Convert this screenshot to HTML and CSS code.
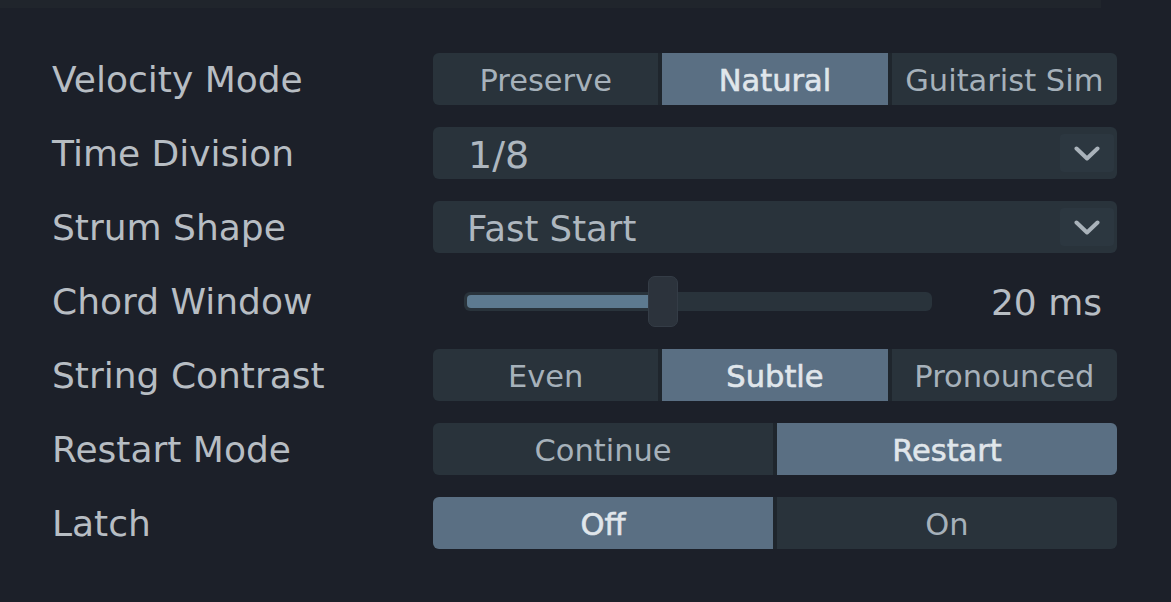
FILE: index.html
```html
<!DOCTYPE html>
<html>
<head>
<meta charset="utf-8">
<link rel="stylesheet" href="styles.css">
</head>
<body>
<div class="topband"></div>
<div class="panel">
  <div class="row">
    <div class="label">Velocity Mode</div>
    <div class="seg">
      <div class="opt">Preserve</div>
      <div class="opt on">Natural</div>
      <div class="opt">Guitarist Sim</div>
    </div>
  </div>
  <div class="row">
    <div class="label">Time Division</div>
    <div class="dropdown">
      <span class="dd-text digits">1/8</span>
      <span class="chev"><svg width="26" height="15" viewBox="0 0 26 15"><polyline points="2.5,2.5 13,12.5 23.5,2.5" fill="none" stroke="#a9b2ba" stroke-width="4" stroke-linecap="round" stroke-linejoin="round"/></svg></span>
    </div>
  </div>
  <div class="row">
    <div class="label">Strum Shape</div>
    <div class="dropdown">
      <span class="dd-text">Fast Start</span>
      <span class="chev"><svg width="26" height="15" viewBox="0 0 26 15"><polyline points="2.5,2.5 13,12.5 23.5,2.5" fill="none" stroke="#a9b2ba" stroke-width="4" stroke-linecap="round" stroke-linejoin="round"/></svg></span>
    </div>
  </div>
  <div class="row">
    <div class="label">Chord Window</div>
    <div class="slider">
      <div class="track">
        <div class="fill" style="width:188px"></div>
        <div class="thumb" style="left:184px"></div>
      </div>
      <div class="value">20 ms</div>
    </div>
  </div>
  <div class="row">
    <div class="label">String Contrast</div>
    <div class="seg">
      <div class="opt">Even</div>
      <div class="opt on">Subtle</div>
      <div class="opt">Pronounced</div>
    </div>
  </div>
  <div class="row">
    <div class="label">Restart Mode</div>
    <div class="seg">
      <div class="opt">Continue</div>
      <div class="opt on">Restart</div>
    </div>
  </div>
  <div class="row">
    <div class="label">Latch</div>
    <div class="seg">
      <div class="opt on">Off</div>
      <div class="opt">On</div>
    </div>
  </div>
</div>
</body>
</html>
```

FILE: styles.css
```css
html, body {
  margin: 0;
  padding: 0;
  background: #1c2029;
  width: 1171px;
  height: 602px;
  overflow: hidden;
  font-family: "DejaVu Sans", "Liberation Sans", sans-serif;
}

.topband {
  width: 1101px;
  height: 8px;
  background: #20252c;
}

.panel {
  padding: 45px 0 0 52px;
  display: flex;
  flex-direction: column;
  gap: 22px;
}

.row {
  display: grid;
  grid-template-columns: 381px 684px;
  grid-template-rows: 52px;
  height: 52px;
  align-items: center;
}

.label {
  color: #b7bdc3;
  font-size: 36px;
  line-height: 50px;
  padding-top: 2px;
  white-space: nowrap;
}

.seg {
  display: flex;
  gap: 4px;
  height: 52px;
  background: #1f262d;
  border-radius: 6px;
  overflow: hidden;
}

.opt {
  flex: 1;
  display: flex;
  align-items: center;
  justify-content: center;
  padding-top: 2px;
  background: #29333b;
  color: #a6b1ba;
  font-size: 30.5px;
  white-space: nowrap;
}

.opt.on {
  background: #5a6f83;
  color: #e0e6eb;
  -webkit-text-stroke: 0.6px #e0e6eb;
}

.dropdown {
  display: flex;
  align-items: center;
  height: 52px;
  background: #29333b;
  border-radius: 6px;
  padding: 0 3px 0 34px;
}

.dd-text {
  color: #aeb7bf;
  font-size: 35.5px;
  padding-top: 3px;
}

.dd-text.digits {
  font-size: 38px;
  padding-left: 1px;
}

.chev {
  margin-left: auto;
  width: 54px;
  height: 38px;
  background: #2c3740;
  border-radius: 4px;
  display: flex;
  align-items: center;
  justify-content: center;
}

.slider {
  display: flex;
  align-items: center;
  height: 52px;
  padding-left: 31px;
  padding-right: 15px;
}

.track {
  position: relative;
  width: 468px;
  height: 19px;
  box-sizing: border-box;
  padding: 3px;
  background: #29333b;
  border-radius: 6px;
}

.fill {
  height: 13px;
  background: #5d7a90;
  border-radius: 4px;
}

.thumb {
  position: absolute;
  top: -16px;
  width: 30px;
  height: 51px;
  box-sizing: border-box;
  background: #2c333c;
  border: 1px solid #343c46;
  border-radius: 7px;
}

.value {
  margin-left: auto;
  padding-top: 2px;
  color: #b7bdc3;
  font-size: 36px;
}
```
